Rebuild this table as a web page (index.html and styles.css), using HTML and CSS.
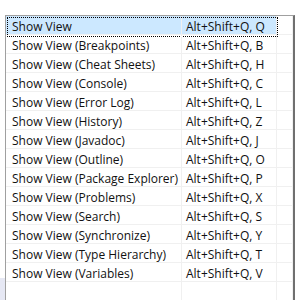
FILE: index.html
```html
<!DOCTYPE html>
<html lang="ko">

<head>
    <meta charset="UTF-8">
    <title>Keys</title>
    <link rel="stylesheet" href="styles.css">
</head>

<body>
    <div class="table-frame">
        <div class="row selected">
            <div class="cell name">Show View</div>
            <div class="cell key">Alt+Shift+Q, Q</div>
            <div class="cell fill"></div>
        </div>
        <div class="row">
            <div class="cell name">Show View (Breakpoints)</div>
            <div class="cell key">Alt+Shift+Q, B</div>
            <div class="cell fill"></div>
        </div>
        <div class="row">
            <div class="cell name">Show View (Cheat Sheets)</div>
            <div class="cell key">Alt+Shift+Q, H</div>
            <div class="cell fill"></div>
        </div>
        <div class="row">
            <div class="cell name">Show View (Console)</div>
            <div class="cell key">Alt+Shift+Q, C</div>
            <div class="cell fill"></div>
        </div>
        <div class="row">
            <div class="cell name">Show View (Error Log)</div>
            <div class="cell key">Alt+Shift+Q, L</div>
            <div class="cell fill"></div>
        </div>
        <div class="row">
            <div class="cell name">Show View (History)</div>
            <div class="cell key">Alt+Shift+Q, Z</div>
            <div class="cell fill"></div>
        </div>
        <div class="row">
            <div class="cell name">Show View (Javadoc)</div>
            <div class="cell key">Alt+Shift+Q, J</div>
            <div class="cell fill"></div>
        </div>
        <div class="row">
            <div class="cell name">Show View (Outline)</div>
            <div class="cell key">Alt+Shift+Q, O</div>
            <div class="cell fill"></div>
        </div>
        <div class="row">
            <div class="cell name">Show View (Package Explorer)</div>
            <div class="cell key">Alt+Shift+Q, P</div>
            <div class="cell fill"></div>
        </div>
        <div class="row">
            <div class="cell name">Show View (Problems)</div>
            <div class="cell key">Alt+Shift+Q, X</div>
            <div class="cell fill"></div>
        </div>
        <div class="row">
            <div class="cell name">Show View (Search)</div>
            <div class="cell key">Alt+Shift+Q, S</div>
            <div class="cell fill"></div>
        </div>
        <div class="row">
            <div class="cell name">Show View (Synchronize)</div>
            <div class="cell key">Alt+Shift+Q, Y</div>
            <div class="cell fill"></div>
        </div>
        <div class="row">
            <div class="cell name">Show View (Type Hierarchy)</div>
            <div class="cell key">Alt+Shift+Q, T</div>
            <div class="cell fill"></div>
        </div>
        <div class="row">
            <div class="cell name">Show View (Variables)</div>
            <div class="cell key">Alt+Shift+Q, V</div>
            <div class="cell fill"></div>
        </div>
        <div class="row empty">
            <div class="cell name"></div>
            <div class="cell key"></div>
            <div class="cell fill"></div>
        </div>
    </div>
    <div class="side-strip"></div>
</body>

</html>
```

FILE: styles.css
```css
* {
    margin: 0;
    padding: 0;
    box-sizing: border-box;
}

body {
    font-family: "Open Sans", "Noto Sans CJK KR", sans-serif;
    font-size: 12px;
    color: #111;
    background: white;
    height: 300px;
    overflow: hidden;
    position: relative;
}

.table-frame {
    margin: 15px 1px 0 5px;
    height: 285px;
    border-top: 1px solid #a0a0a0;
    border-left: 1px solid #a0a0a0;
    border-right: 2px solid #707070;
    overflow: hidden;
}

/* bit of the window behind, showing at the lower left */
.side-strip {
    position: absolute;
    left: 0;
    top: 278px;
    width: 5px;
    height: 22px;
    background: #e6e8f4;
}

.row {
    display: grid;
    grid-template-columns: 176px 95px 1fr;
    height: 19px;
    position: relative;
}

.cell {
    border-right: 1px solid #f0f0f0;
    border-bottom: 1px solid #f0f0f0;
    padding-top: 2px;
    line-height: 17px;
    white-space: nowrap;
    overflow: hidden;
}

.name {
    padding-left: 6px;
}

.key {
    padding-left: 4px;
}

.row.empty {
    height: 20px;
}

.selected .name,
.selected .key {
    background: #cce8ff;
}

/* focus rectangle on the current row */
.selected::after {
    content: "";
    position: absolute;
    left: 1px;
    top: 1px;
    width: 269px;
    height: 18px;
    border: 1px dotted #000;
}
```
